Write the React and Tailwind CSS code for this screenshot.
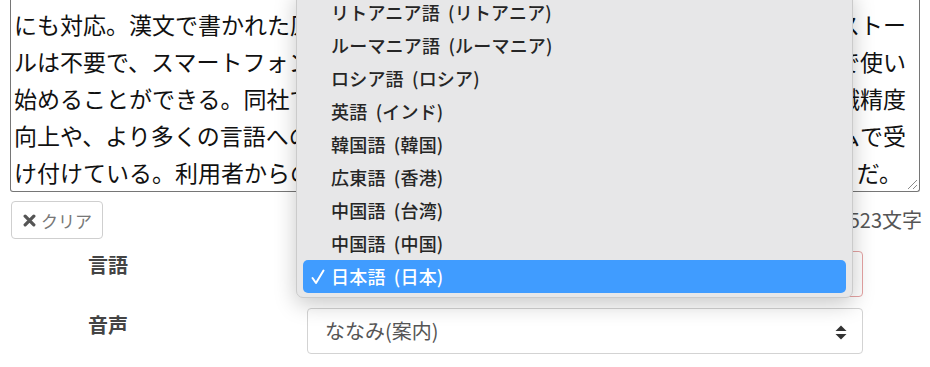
import React from "react";

const lines = [
  ["にも対応。漢文で書かれた原", "ストー"],
  ["ルは不要で、スマートフォン", "で使い"],
  ["始めることができる。同社で", "識精度"],
  ["向上や、より多くの言語への", "ムで受"],
  ["け付けている。利用者からの", "だ。"],
];

const items = [
  "リトアニア語 (リトアニア)",
  "ルーマニア語 (ルーマニア)",
  "ロシア語 (ロシア)",
  "英語 (インド)",
  "韓国語 (韓国)",
  "広東語 (香港)",
  "中国語 (台湾)",
  "中国語 (中国)",
];

export default function App() {
  return (
    <div className="relative w-[930px] h-[367px] overflow-hidden bg-white font-['Noto_Sans_CJK_JP',sans-serif]">
      {/* textarea */}
      <div className="relative mx-[10px] h-[192px] border-x border-b border-[#767676] rounded-b-[3px] pt-[6px] pl-[3px] pr-[13px] text-[23px] leading-[37px] text-[#111]">
        {lines.map(([l, r], i) => (
          <div key={i} className="flex justify-between whitespace-nowrap">
            <span>{l}</span>
            <span className={i === 4 ? "pr-[4px]" : ""}>{r}</span>
          </div>
        ))}
        <svg className="absolute right-[1px] bottom-[1px]" width="12" height="12" viewBox="0 0 12 12">
          <line x1="11" y1="2" x2="2" y2="11" stroke="#8a8a8a" strokeWidth="1" />
          <line x1="11" y1="7" x2="7" y2="11" stroke="#8a8a8a" strokeWidth="1" />
        </svg>
      </div>

      {/* clear row */}
      <div className="mt-[9px] ml-[11px] mr-[8px] flex items-center justify-between">
        <div className="flex items-center h-[38px] w-[92px] border border-[#cfcfcf] rounded-[4px] bg-white pl-[11px]">
          <svg width="13" height="13" viewBox="0 0 12 12" className="mr-[5px]">
            <path d="M2 2 L10 10 M10 2 L2 10" stroke="#555" strokeWidth="3" strokeLinecap="round" />
          </svg>
          <span className="text-[17px] text-[#777] leading-none">クリア</span>
        </div>
        <span className="text-[20px] text-[#555] leading-none">523文字</span>
      </div>

      {/* language row */}
      <div className="mt-[12px] flex">
        <div className="w-[307px] pl-[88px] text-[20px] leading-[28px] font-bold text-[#444]">言語</div>
        <div className="w-[556px] h-[46px] border border-[#e5a3a3] rounded-[4px] bg-white"></div>
      </div>

      {/* voice row */}
      <div className="mt-[11px] flex">
        <div className="w-[307px] pl-[88px] pt-[3px] text-[20px] leading-[28px] font-bold text-[#444]">音声</div>
        <div className="relative w-[556px] h-[46px] border border-[#d3d3d3] rounded-[4px] bg-white flex items-center pl-[17px]">
          <span className="text-[20px] text-[#555]">ななみ(案内)</span>
          <svg className="absolute right-[15px] top-[16px]" width="12" height="15" viewBox="0 0 12 15">
            <path d="M6 0.5 L11.5 6 L0.5 6 Z" fill="#333" />
            <path d="M6 14.5 L11.5 9 L0.5 9 Z" fill="#333" />
          </svg>
        </div>
      </div>

      {/* open dropdown menu */}
      <div className="absolute left-[296px] top-[-10px] w-[557px] h-[308px] bg-[#e7e7e8] border border-[#cbcbcb] rounded-[7px] shadow-[0_6px_22px_rgba(0,0,0,0.22)] pt-[5px] px-[6px]">
        {items.map((t) => (
          <div key={t} className="h-[33px] flex items-center pl-[28px] text-[18px] font-medium text-[#262626] [word-spacing:4px] tracking-[0.2px]">
            {t}
          </div>
        ))}
        <div className="h-[33px] flex items-center bg-[#409cff] rounded-[5px] pl-[8px] text-[18px] font-medium text-white [word-spacing:4px] tracking-[0.2px]">
          <svg width="14" height="16" viewBox="0 0 14 16" className="mr-[6px]">
            <path d="M1.5 9 L5 14 L12.5 1.5" stroke="#fff" strokeWidth="2" fill="none" strokeLinecap="round" strokeLinejoin="round" />
          </svg>
          日本語 (日本)
        </div>
      </div>
    </div>
  );
}
